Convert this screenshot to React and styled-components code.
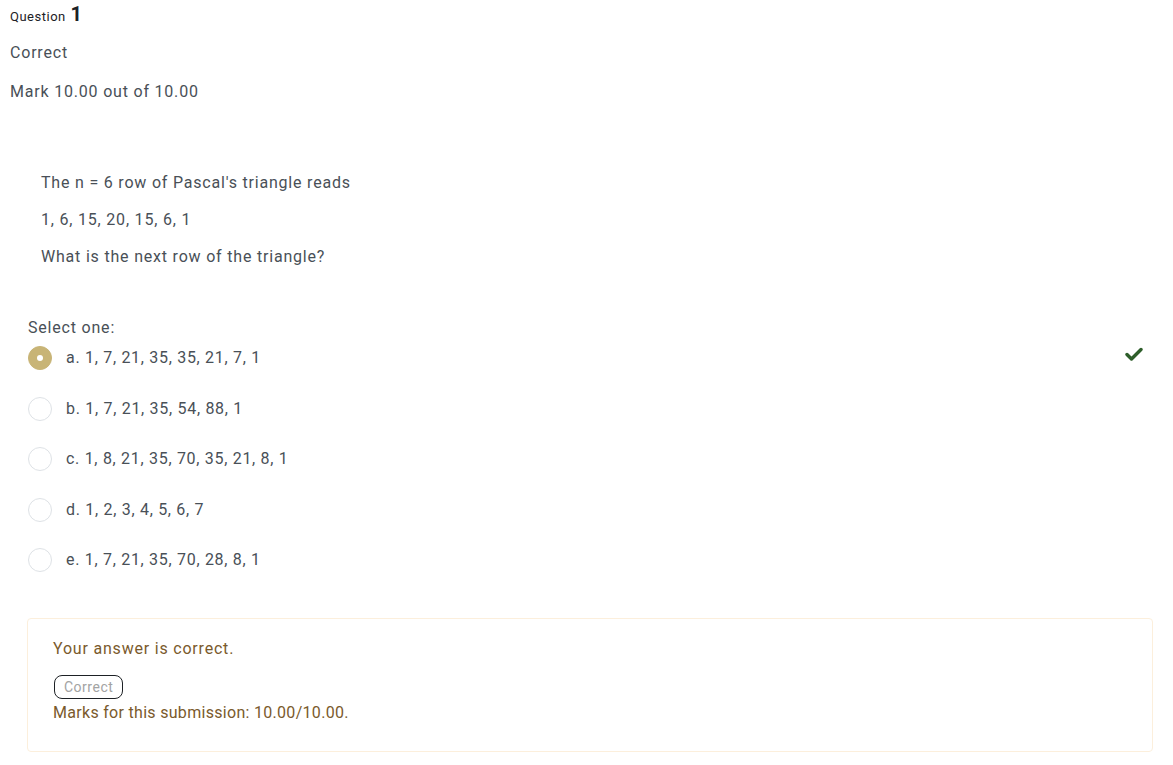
import React from "react";
import styled, { createGlobalStyle } from "styled-components";

const Global = createGlobalStyle`
  html, body { margin: 0; padding: 0; background: #fff; }
  body { font-family: Roboto, "Liberation Sans", sans-serif; color: #495057; letter-spacing: 0.8px; }
`;

const Page = styled.div`
  padding: 0 20px 0 10px;
`;

const Info = styled.div`
  display: flex;
  flex-direction: column;
`;

const QNo = styled.h3`
  margin: 0;
  padding-top: 3px;
  font-size: 13px;
  font-weight: 400;
  color: #1d2125;
  line-height: 22px;
  letter-spacing: 0.5px;
  & span { font-size: 20px; font-weight: 700; margin-left: 1px; }
`;

const State = styled.div`
  font-size: 16px;
  line-height: 24px;
  margin-top: 13px;
`;

const Grade = styled.div`
  font-size: 16px;
  line-height: 24px;
  margin-top: 15px;
`;

const Content = styled.div`
  padding-left: 17px;
  margin-top: 67px;
`;

const QText = styled.div`
  padding-left: 14px;
  & p { margin: 0 0 13px; font-size: 16px; line-height: 24px; }
`;

const Ablock = styled.div`
  margin-top: 47px;
`;

const Prompt = styled.div`
  font-size: 16px;
  line-height: 24px;
  padding-left: 1px;
`;

const Options = styled.div`
  display: flex;
  flex-direction: column;
  gap: 26.5px;
  margin-top: 6px;
  padding-left: 1px;
`;

const Option = styled.div`
  display: flex;
  align-items: center;
  height: 24px;
  gap: 14px;
`;

const Radio = styled.span`
  width: 24px;
  height: 24px;
  border-radius: 50%;
  box-sizing: border-box;
  display: flex;
  align-items: center;
  justify-content: center;
  flex: none;
  background: ${p => (p.$checked ? "#c8b476" : "#fff")};
  border: 1px solid ${p => (p.$checked ? "#c8b476" : "#dee2e6")};
  &::after {
    content: "";
    display: ${p => (p.$checked ? "block" : "none")};
    width: 6px;
    height: 6px;
    border-radius: 50%;
    background: #fff;
  }
`;

const OptLabel = styled.span`
  flex: 1;
  font-size: 16px;
  line-height: 24px;
  color: #495057;
  letter-spacing: 0.7px;
`;

const Tick = styled.span`
  display: flex;
  margin-right: 10px;
  margin-top: -8px;
`;

const Feedback = styled.div`
  margin-top: 46px;
  border: 1px solid #fcefdc;
  border-radius: 4px;
  padding: 18px 25px 26px;
  color: #7a5a2c;
`;

const FbText = styled.div`
  font-size: 16px;
  line-height: 24px;
`;

const Badge = styled.span`
  display: inline-block;
  margin-top: 14px;
  margin-left: 1px;
  border: 1px solid #1d2125;
  border-radius: 8px;
  padding: 0 9px;
  font-size: 14px;
  line-height: 22px;
  letter-spacing: 0.5px;
  color: #a3a3a3;
`;

const Marks = styled.div`
  font-size: 16px;
  line-height: 24px;
  margin-top: 2px;
  letter-spacing: 0.3px;
`;

const options = [
  { l: "a.", t: "1, 7, 21, 35, 35, 21, 7, 1", checked: true },
  { l: "b.", t: "1, 7, 21, 35, 54, 88, 1" },
  { l: "c.", t: "1, 8, 21, 35, 70, 35, 21, 8, 1" },
  { l: "d.", t: "1, 2, 3, 4, 5, 6, 7" },
  { l: "e.", t: "1, 7, 21, 35, 70, 28, 8, 1" },
];

const Check = () => (
  <svg width="18" height="14" viewBox="0 0 18 14">
    <path d="M2 7.5 L6.5 12 L16 2.5" fill="none" stroke="#2e5e2a" strokeWidth="3.4" strokeLinecap="round" strokeLinejoin="round" />
  </svg>
);

export default function App() {
  return (
    <>
      <Global />
      <Page>
        <Info>
          <QNo>Question <span>1</span></QNo>
          <State>Correct</State>
          <Grade>Mark 10.00 out of 10.00</Grade>
        </Info>
        <Content>
          <QText>
            <p>The n = 6 row of Pascal's triangle reads</p>
            <p>1, 6, 15, 20, 15, 6, 1</p>
            <p>What is the next row of the triangle?</p>
          </QText>
          <Ablock>
            <Prompt>Select one:</Prompt>
            <Options>
              {options.map(o => (
                <Option key={o.l}>
                  <Radio $checked={o.checked} />
                  <OptLabel>{o.l} {o.t}</OptLabel>
                  {o.checked && <Tick><Check /></Tick>}
                </Option>
              ))}
            </Options>
          </Ablock>
          <Feedback>
            <FbText>Your answer is correct.</FbText>
            <Badge>Correct</Badge>
            <Marks>Marks for this submission: 10.00/10.00.</Marks>
          </Feedback>
        </Content>
      </Page>
    </>
  );
}
